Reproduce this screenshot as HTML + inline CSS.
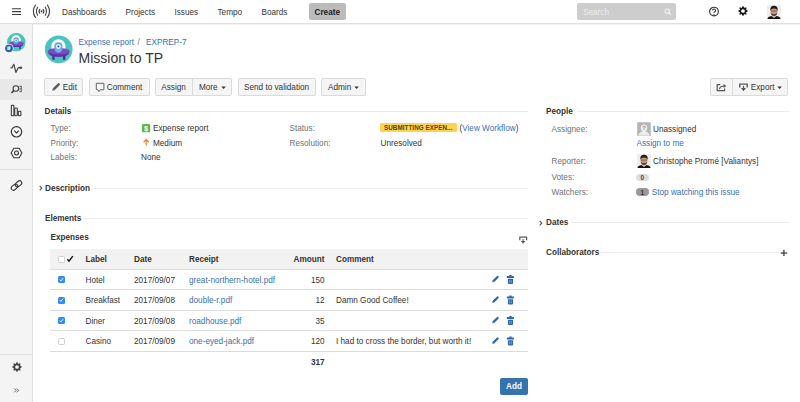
<!DOCTYPE html>
<html><head><meta charset="utf-8">
<style>
*{box-sizing:border-box;margin:0;padding:0}
html,body{width:800px;height:402px;overflow:hidden;background:#fff}
body{font-family:"Liberation Sans",sans-serif;color:#333;position:relative;font-size:8.2px}
.a{position:absolute;white-space:nowrap;line-height:1}
svg.a{overflow:visible}
#hdr{position:absolute;left:0;top:0;width:800px;height:24px;background:#fff;border-bottom:1px solid #e0e0e0;box-shadow:0 1px 0 #f3f3f3}
.nav{font-size:8.2px;color:#333;top:9px}
#create{position:absolute;left:309px;top:3px;width:37px;height:17px;background:#bbb;border-radius:2px}
#search{position:absolute;left:577px;top:3px;width:99px;height:17px;background:#cdcdcd;border-radius:2px}
#side{position:absolute;left:0;top:24px;width:33px;height:378px;background:#f4f4f4;border-right:1px solid #e0e0e0}
.btn{position:absolute;top:78px;height:18px;background:#f5f5f5;border:1px solid #dadada;border-radius:2px}
.bt{top:84.4px}
.lnk{color:#3870b0}
.lbl{color:#707070}
.b{font-weight:bold}
.hl{position:absolute;height:1px;background:#ebebeb}
.rb{position:absolute;left:50px;width:478px;height:1px;background:#dcdcdc}
.cb{position:absolute;left:58.2px;width:6.8px;height:7px;border-radius:1.5px;background:#2f8cf8}
</style></head><body>
<div id="hdr"></div>
<svg class="a" style="left:0;top:0" width="60" height="24">
 <g stroke="#3d3d3d" stroke-width="1.15"><path d="M12 8.7h9M12 11.6h9M12 14.5h9"/></g>
 <g fill="none" stroke="#3a3a3a" stroke-width="1.1" stroke-linecap="round">
  <path d="M35.5 5 Q31.1 11.25 35.5 17.5"/><path d="M47.4 5 Q51.8 11.25 47.4 17.5"/>
  <path d="M37.6 7.2 Q35.2 11.25 37.6 15.3"/><path d="M45.3 7.2 Q47.7 11.25 45.3 15.3"/>
  <path d="M39.8 9.3 Q38.2 11.25 39.8 13.2"/><path d="M43.1 9.3 Q44.7 11.25 43.1 13.2"/>
 </g>
 <circle cx="41.5" cy="11.25" r="0.9" fill="#333"/>
</svg>
<div class="a nav" style="left:62px">Dashboards</div>
<div class="a nav" style="left:125.5px">Projects</div>
<div class="a nav" style="left:174.5px">Issues</div>
<div class="a nav" style="left:217.5px">Tempo</div>
<div class="a nav" style="left:261.5px">Boards</div>
<div id="create"></div>
<div class="a b" style="left:314.5px;top:8.6px;font-size:8.2px;color:#222">Create</div>
<div id="search"></div>
<div class="a" style="left:583px;top:8.5px;font-size:8.2px;color:#eee">Search</div>
<svg class="a" style="left:662.5px;top:7px" width="10" height="10"><circle cx="4.2" cy="4.2" r="2.2" fill="none" stroke="#f2f2f2" stroke-width="1.1"/><path d="M5.8 5.8L7.8 7.8" stroke="#f2f2f2" stroke-width="1.4"/></svg>
<svg class="a" style="left:708px;top:6px" width="12" height="12"><circle cx="6" cy="5.55" r="4.35" fill="none" stroke="#333" stroke-width="1.15"/><path d="M4.45 4.5 Q4.45 3.05 6 3.05 Q7.55 3.05 7.55 4.4 Q7.55 5.3 6.6 5.8 Q6 6.15 6 7.1" fill="none" stroke="#333" stroke-width="1.05"/><circle cx="6" cy="8.35" r="0.65" fill="#333"/></svg>
<svg class="a" style="left:738px;top:6.4px" width="10" height="10" viewBox="-5 -5 10 10"><g fill="#1a1a1a" transform="scale(1.0)"><circle r="3.4"/><path d="M-1.2 -2.8L-0.55 -4.7H0.55L1.2 -2.8z" transform="rotate(0)"/><path d="M-1.2 -2.8L-0.55 -4.7H0.55L1.2 -2.8z" transform="rotate(45)"/><path d="M-1.2 -2.8L-0.55 -4.7H0.55L1.2 -2.8z" transform="rotate(90)"/><path d="M-1.2 -2.8L-0.55 -4.7H0.55L1.2 -2.8z" transform="rotate(135)"/><path d="M-1.2 -2.8L-0.55 -4.7H0.55L1.2 -2.8z" transform="rotate(180)"/><path d="M-1.2 -2.8L-0.55 -4.7H0.55L1.2 -2.8z" transform="rotate(225)"/><path d="M-1.2 -2.8L-0.55 -4.7H0.55L1.2 -2.8z" transform="rotate(270)"/><path d="M-1.2 -2.8L-0.55 -4.7H0.55L1.2 -2.8z" transform="rotate(315)"/></g><circle r="1.85" fill="#fff"/></svg>
<svg class="a" style="left:767px;top:4.5px" width="14" height="14">
 <rect width="14" height="14" fill="#ededed"/>
 <path d="M5.4 9.5h3.2v3h-3.2z" fill="#d9bba3"/>
 <path d="M0.4 14 Q0.8 11.7 4.4 11 L7 12.9 L9.6 11 Q13.2 11.7 13.6 14z" fill="#141414"/>
 <ellipse cx="7" cy="6.6" rx="3.4" ry="4" fill="#c99e7f"/>
 <path d="M3.3 6 Q2.8 0.9 7 0.8 Q11.2 0.9 10.7 6 Q10.1 3.4 7 3.4 Q3.9 3.4 3.3 6z" fill="#231b17"/>
 <path d="M3.7 7.4 Q4 10.9 7 11 Q10 10.9 10.3 7.4 Q9.5 9.2 7 9.1 Q4.5 9.2 3.7 7.4z" fill="#5b4131"/>
 <path d="M3.9 6.1h6.2" stroke="#3a2a20" stroke-width="0.55"/>
</svg>

<!-- sidebar -->
<div id="side"></div>
<div style="position:absolute;left:0;top:78.5px;width:32px;height:21px;background:#e8e8e8"></div>
<div style="position:absolute;left:0;top:168.5px;width:32px;height:1px;background:#dedede"></div>
<div style="position:absolute;left:0;top:354px;width:32px;height:1px;background:#dedede"></div>
<!-- project avatar small -->
<svg class="a" style="left:0;top:24px" width="32" height="32" viewBox="0 0 32 32">
 <circle cx="16.3" cy="18.1" r="9.9" fill="#fff"/>
 <g transform="translate(16.3 18.1) scale(0.672) translate(-14.7 -14.35)">
  <circle cx="14.7" cy="14.35" r="13.85" fill="#4cc3bd"/>
  <path d="M7.4 11.3 A7 7 0 0 1 21.4 11.3 V14 H7.4 Z" fill="#fff"/>
  <path d="M3.8 16.2 C3.8 12 25.6 12 25.6 16.2 C25.6 20.6 20.5 21.8 14.7 21.8 C8.9 21.8 3.8 20.6 3.8 16.2 Z" fill="#7a4cc4"/>
  <path d="M4.2 18 C6 20.8 10 21.8 14.7 21.8 C19.4 21.8 23.4 20.8 25.2 18 Q14.7 20.6 4.2 18z" fill="#5d35a8"/>
  <rect x="10.4" y="7.2" width="8" height="10.2" rx="4" fill="#56a7e8"/>
  <circle cx="14.4" cy="11.6" r="2.4" fill="#fff"/><circle cx="14.4" cy="11.6" r="1" fill="#2b3f6b"/>
  <rect x="8.3" y="20.5" width="2.3" height="4.2" rx="0.5" fill="#4b2a98"/><rect x="19" y="20.5" width="2.3" height="4.2" rx="0.5" fill="#4b2a98"/>
 </g>
 <circle cx="9" cy="24.3" r="4.6" fill="#fff"/>
 <circle cx="9" cy="24.3" r="3.9" fill="#2a63ae"/>
 <path d="M7.3 22.4h3.2v2.4l-1 1.1h-2.2z" fill="#d6e3f5"/>
</svg>
<!-- sidebar icons -->
<svg class="a" style="left:0;top:60px" width="32" height="300">
 <g fill="none" stroke="#333" stroke-width="1.05" stroke-linejoin="round" stroke-linecap="round">
  <path d="M10.9 7.8 L12 7.8 L13.8 4.3 L15.9 12.4 L18.2 7.7 L21 7.7" stroke="#444" stroke-width="1.2"/>
 </g>
 <circle cx="20.8" cy="7.7" r="1.25" fill="#444"/>
 <g fill="none" stroke="#333" stroke-width="1.05">
  <circle cx="15.9" cy="28.5" r="2.8" stroke="#3a3a3a"/><path d="M13.8 30.6 L11.5 32.9" stroke-width="1.5" stroke="#3a3a3a"/>
  <path d="M19.4 26.4h2.3M19.4 29h2.3M19.4 31.6h2.3M21.3 26.4v5.2" stroke-width="0.9" stroke="#555"/>
  <rect x="11.3" y="45.3" width="2.6" height="10.5" rx="0.8"/>
  <rect x="14.7" y="48" width="2.6" height="7.8" rx="0.8"/>
  <rect x="18.3" y="51.3" width="2.6" height="4.5" rx="0.8"/>
  <circle cx="16.5" cy="71.8" r="5.2" stroke-width="1.2"/>
  <path d="M14.2 70.6 L16.5 72.9 L18.8 70.6" stroke-width="1.1"/>
  <path d="M13.8 88.2 L19.2 88.2 L21.9 93 L19.2 97.8 L13.8 97.8 L11.1 93 Z"/>
  <circle cx="16.5" cy="93" r="2"/>
  <g transform="rotate(-40 16.5 125.5)"><rect x="10.3" y="123.3" width="7.2" height="4.4" rx="2.2"/><rect x="15.5" y="123.3" width="7.2" height="4.4" rx="2.2"/></g>
 </g>
 <path d="M14.3 328.5 L16.2 330.4 L14.3 332.3 M16.8 328.5 L18.7 330.4 L16.8 332.3" fill="none" stroke="#555" stroke-width="0.9"/>
</svg>
<svg class="a" style="left:11.7px;top:362px" width="10" height="10" viewBox="-5 -5 10 10"><g fill="#444" transform="scale(1.0)"><circle r="3.4"/><path d="M-1.2 -2.8L-0.55 -4.7H0.55L1.2 -2.8z" transform="rotate(0)"/><path d="M-1.2 -2.8L-0.55 -4.7H0.55L1.2 -2.8z" transform="rotate(45)"/><path d="M-1.2 -2.8L-0.55 -4.7H0.55L1.2 -2.8z" transform="rotate(90)"/><path d="M-1.2 -2.8L-0.55 -4.7H0.55L1.2 -2.8z" transform="rotate(135)"/><path d="M-1.2 -2.8L-0.55 -4.7H0.55L1.2 -2.8z" transform="rotate(180)"/><path d="M-1.2 -2.8L-0.55 -4.7H0.55L1.2 -2.8z" transform="rotate(225)"/><path d="M-1.2 -2.8L-0.55 -4.7H0.55L1.2 -2.8z" transform="rotate(270)"/><path d="M-1.2 -2.8L-0.55 -4.7H0.55L1.2 -2.8z" transform="rotate(315)"/></g><circle r="1.85" fill="#f4f4f4"/></svg>

<!-- main header -->
<svg class="a" style="left:44px;top:35px" width="30" height="30" viewBox="0 0 30 30">
  <circle cx="14.7" cy="14.35" r="13.85" fill="#4cc3bd"/>
  <path d="M7.4 11.3 A7 7 0 0 1 21.4 11.3 V14 H7.4 Z" fill="#fff"/>
  <path d="M3.8 16.2 C3.8 12 25.6 12 25.6 16.2 C25.6 20.6 20.5 21.8 14.7 21.8 C8.9 21.8 3.8 20.6 3.8 16.2 Z" fill="#7a4cc4"/>
  <path d="M4.2 18 C6 20.8 10 21.8 14.7 21.8 C19.4 21.8 23.4 20.8 25.2 18 Q14.7 20.6 4.2 18z" fill="#5d35a8"/>
  <rect x="10.4" y="7.2" width="8" height="10.2" rx="4" fill="#56a7e8"/>
  <rect x="11.6" y="9" width="5.6" height="8.4" rx="2.8" fill="#6ab4ee"/>
  <circle cx="14.4" cy="11.6" r="2.4" fill="#fff"/><circle cx="14.4" cy="11.6" r="1" fill="#2b3f6b"/>
  <rect x="8.3" y="20.5" width="2.3" height="4.2" rx="0.5" fill="#4b2a98"/><rect x="19" y="20.5" width="2.3" height="4.2" rx="0.5" fill="#4b2a98"/>
</svg>
<div class="a lnk" style="left:78.5px;top:38.9px;font-size:8.2px">Expense report</div>
<div class="a" style="left:137.6px;top:38.9px;font-size:8.2px;color:#707070">/</div>
<div class="a lnk" style="left:146px;top:38.9px;font-size:8.2px">EXPREP-7</div>
<div class="a" style="left:78.5px;top:50.6px;font-size:14px;color:#333">Mission to TP</div>

<!-- buttons -->
<div class="btn" style="left:44px;width:39px"></div>
<svg class="a" style="left:51px;top:82px" width="10" height="10"><path d="M3 7L7.7 2.3" stroke="#5e5e5e" stroke-width="2.5" stroke-linecap="round"/><path d="M1.1 8.9L1.7 6.4L3.6 8.3z" fill="#8a8a8a"/></svg>
<div class="a bt" style="left:62.8px">Edit</div>
<div class="btn" style="left:89px;width:61px"></div>
<svg class="a" style="left:95px;top:82px" width="11" height="11"><path d="M1.3 1.3h7.6v6.4h-3.6l-1.3 1.9l-1.2-1.9h-1.5z" fill="none" stroke="#5e5e5e" stroke-width="0.95" stroke-linejoin="round"/></svg>
<div class="a bt" style="left:106.8px">Comment</div>
<div class="btn" style="left:155px;width:77px"></div>
<div style="position:absolute;left:192px;top:78px;width:1px;height:18px;background:#dadada"></div>
<div class="a bt" style="left:161.3px">Assign</div>
<div class="a bt" style="left:199px">More</div>
<svg class="a" style="left:220.5px;top:86px" width="6" height="4"><path d="M0.4 0.6h4.4L2.6 2.9z" fill="#333"/></svg>
<div class="btn" style="left:237.5px;width:78.5px"></div>
<div class="a bt" style="left:244px">Send to validation</div>
<div class="btn" style="left:321px;width:45px"></div>
<div class="a bt" style="left:328px">Admin</div>
<svg class="a" style="left:354px;top:86px" width="6" height="4"><path d="M0.4 0.6h4.4L2.6 2.9z" fill="#333"/></svg>
<div class="btn" style="left:710px;width:78px"></div>
<div style="position:absolute;left:732px;top:78px;width:1px;height:18px;background:#dadada"></div>
<svg class="a" style="left:715px;top:82px" width="14" height="11"><path d="M5.2 2.6H2.2V8.6H9.6V6.6" fill="none" stroke="#555" stroke-width="1.2"/><path d="M4.4 7.1 Q5 4.1 9 4" fill="none" stroke="#555" stroke-width="1.2"/><path d="M8.6 1.9L11.3 4L8.6 6.1z" fill="#555"/></svg>
<svg class="a" style="left:738px;top:82px" width="12" height="11"><path d="M1.8 5.6V2.1H9.2V5.6" fill="none" stroke="#5a5a5a" stroke-width="1.4"/><path d="M5.5 3.8v3" stroke="#555" stroke-width="1.2"/><path d="M3 6.1H8L5.5 9.2z" fill="#555"/></svg>
<div class="a bt" style="left:750.8px">Export</div>
<svg class="a" style="left:776.5px;top:86px" width="6" height="4"><path d="M0.4 0.6h4.4L2.6 2.9z" fill="#333"/></svg>

<!-- Details -->
<div class="a b" style="left:44.5px;top:107.7px">Details</div>
<div class="hl" style="left:74.5px;top:111px;width:453.5px"></div>
<div class="a lbl" style="left:50.5px;top:124.5px">Type:</div>
<div class="a lbl" style="left:50.5px;top:139.6px">Priority:</div>
<div class="a lbl" style="left:50.5px;top:153.5px">Labels:</div>
<svg class="a" style="left:141.7px;top:123.7px" width="8.2" height="8.2"><rect width="8.2" height="8.2" rx="1.2" fill="#5fb83c"/><text x="4.1" y="6.8" font-size="6.6" fill="#fff" text-anchor="middle" font-family="Liberation Sans" stroke="#fff" stroke-width="0.25">$</text></svg>
<div class="a" style="left:153px;top:124.5px">Expense report</div>
<svg class="a" style="left:142.9px;top:137.9px" width="7" height="8"><path d="M3.2 7.6V1.6M0.6 4.3L3.2 1.5L5.8 4.3" fill="none" stroke="#f08430" stroke-width="1.25"/></svg>
<div class="a" style="left:153px;top:139.6px">Medium</div>
<div class="a" style="left:141px;top:153.5px">None</div>
<div class="a lbl" style="left:289.5px;top:124.5px">Status:</div>
<div class="a lbl" style="left:289.5px;top:139.6px">Resolution:</div>
<div style="position:absolute;left:380.2px;top:123px;width:77.2px;height:9.2px;background:#ffd351;border-radius:1.5px"></div>
<div class="a b" style="left:384px;top:125.2px;font-size:6.3px;color:#594300;letter-spacing:0.05px">SUBMITTING EXPEN...</div>
<div class="a" style="left:459.5px;top:124.5px"><span>(</span><span class="lnk">View Workflow</span><span>)</span></div>
<div class="a" style="left:380.5px;top:139.6px">Unresolved</div>

<!-- Description -->
<svg class="a" style="left:37.5px;top:183.5px" width="6" height="8"><path d="M1.7 2L3.8 4.2L1.7 6.4" fill="none" stroke="#555" stroke-width="1.1"/></svg>
<div class="a b" style="left:45px;top:184.7px">Description</div>
<div class="hl" style="left:92.5px;top:188px;width:435.5px"></div>
<!-- Elements -->
<div class="a b" style="left:45px;top:214.6px">Elements</div>
<div class="hl" style="left:83px;top:218px;width:445px"></div>
<div class="a b" style="left:50.5px;top:233.8px">Expenses</div>
<svg class="a" style="left:518px;top:234.5px" width="11" height="10"><path d="M1.8 5.3V2.1H8.6V5.3" fill="none" stroke="#5a5a5a" stroke-width="1.2"/><path d="M5.1 4v2.5" stroke="#555" stroke-width="1.1"/><path d="M2.8 6H7.4L5.1 8.8z" fill="#555"/></svg>

<!-- table -->
<div style="position:absolute;left:50px;top:249px;width:478px;height:20px;background:#f2f2f2"></div>
<div class="rb" style="top:269px"></div>
<div class="rb" style="top:289px"></div>
<div class="rb" style="top:310px"></div>
<div class="rb" style="top:330px"></div>
<div class="rb" style="top:351px"></div>
<div style="position:absolute;left:58.2px;top:255.8px;width:6.8px;height:7px;border:0.8px solid #cfcfcf;border-radius:1.5px;background:#fff"></div>
<svg class="a" style="left:66.2px;top:255px" width="8" height="8"><path d="M1.4 4.2L3 6.2L6.8 1.1" fill="none" stroke="#111" stroke-width="1.4"/></svg>
<div class="a b" style="left:85.5px;top:256px">Label</div>
<div class="a b" style="left:134px;top:256px">Date</div>
<div class="a b" style="left:189px;top:256px">Receipt</div>
<div class="a b" style="left:293.5px;top:256px">Amount</div>
<div class="a b" style="left:336px;top:256px">Comment</div>

<div class="cb" style="top:276.3px"></div>
<div class="cb" style="top:296.8px"></div>
<div class="cb" style="top:317.3px"></div>
<div style="position:absolute;left:58.2px;top:337.8px;width:6.8px;height:7px;border:0.8px solid #cfcfcf;border-radius:1.5px;background:#fff"></div>
<svg class="a" style="left:58.2px;top:276.3px" width="7" height="70"><g fill="none" stroke="#fff" stroke-width="1"><path d="M1.7 3.6L2.9 4.9L5.2 2.1"/><path d="M1.7 24.1L2.9 25.4L5.2 22.6"/><path d="M1.7 44.6L2.9 45.9L5.2 43.1"/></g></svg>

<div class="a" style="left:85.5px;top:276.5px">Hotel</div>
<div class="a" style="left:134px;top:276.5px">2017/09/07</div>
<div class="a lnk" style="left:189px;top:276.5px">great-northern-hotel.pdf</div>
<div class="a" style="left:311px;top:276.5px">150</div>

<div class="a" style="left:85.5px;top:297px">Breakfast</div>
<div class="a" style="left:134px;top:297px">2017/09/08</div>
<div class="a lnk" style="left:189px;top:297px">double-r.pdf</div>
<div class="a" style="left:315.5px;top:297px">12</div>
<div class="a" style="left:336px;top:297px">Damn Good Coffee!</div>

<div class="a" style="left:85.5px;top:317.5px">Diner</div>
<div class="a" style="left:134px;top:317.5px">2017/09/08</div>
<div class="a lnk" style="left:189px;top:317.5px">roadhouse.pdf</div>
<div class="a" style="left:315.5px;top:317.5px">35</div>

<div class="a" style="left:85.5px;top:338px">Casino</div>
<div class="a" style="left:134px;top:338px">2017/09/09</div>
<div class="a lnk" style="left:189px;top:338px">one-eyed-jack.pdf</div>
<div class="a" style="left:311px;top:338px">120</div>
<div class="a" style="left:336px;top:338px">I had to cross the border, but worth it!</div>

<svg class="a" style="left:490px;top:274px" width="26" height="72">
 <g id="ic">
 <path d="M3.7 6.9L7.6 3" stroke="#2f66b0" stroke-width="2.3" stroke-linecap="round"/>
 <path d="M2 8.6L2.5 6.4L4.2 8.1z" fill="#6f96cc"/>
 <path d="M16.9 1.9h7v2.1h-7z M19.3 0.9h2.3v1.2h-2.3z M17.9 4.8h5.2v4.3q0 0.8-0.8 0.8h-3.6q-0.8 0-0.8-0.8z" fill="#2f66b0"/>
 <path d="M19.7 5.9v2.9M21.3 5.9v2.9" stroke="#a9c2e4" stroke-width="0.6"/>
 </g>
 <use href="#ic" y="20.5"/><use href="#ic" y="41"/><use href="#ic" y="61.5"/>
</svg>

<div class="a b" style="left:311px;top:358.5px">317</div>
<div style="position:absolute;left:500px;top:377.5px;width:28px;height:17px;background:#3572b0;border-radius:2px"></div>
<div class="a b" style="left:506px;top:382.5px;color:#fff">Add</div>

<!-- People -->
<div class="a b" style="left:546px;top:107.7px">People</div>
<div class="hl" style="left:576.5px;top:111px;width:212px"></div>
<div class="a lbl" style="left:551.5px;top:125.5px">Assignee:</div>
<svg class="a" style="left:636.5px;top:122.3px" width="14" height="14"><rect width="14" height="14" rx="1.5" fill="#b4b4b4"/><rect x="0.5" y="0.5" width="13" height="13" rx="1.2" fill="none" stroke="#c9c9c9" stroke-width="0.8"/><path d="M1.8 13.6v-1.8q1.3-2.1 5.2-2.2q3.9 .1 5.2 2.2v1.8z" fill="#ededed"/><path d="M7 2.4q3.3 0 3.3 3.6q0 2.4-1.6 3.6v0.6h-3.4v-0.6q-1.6-1.2-1.6-3.6q0-3.6 3.3-3.6z" fill="#ededed"/><text x="7" y="8.2" font-size="5.6" font-weight="bold" text-anchor="middle" fill="#8a8a8a" font-family="Liberation Sans">?</text></svg>
<div class="a" style="left:653px;top:125.5px">Unassigned</div>
<div class="a lnk" style="left:636.5px;top:140px">Assign to me</div>
<div class="a lbl" style="left:551.5px;top:157.6px">Reporter:</div>
<svg class="a" style="left:636.6px;top:153.8px" width="14" height="14">
 <rect width="14" height="14" fill="#ededed"/>
 <path d="M5.4 9.5h3.2v3h-3.2z" fill="#d9bba3"/>
 <path d="M0.4 14 Q0.8 11.7 4.4 11 L7 12.9 L9.6 11 Q13.2 11.7 13.6 14z" fill="#141414"/>
 <ellipse cx="7" cy="6.6" rx="3.4" ry="4" fill="#c99e7f"/>
 <path d="M3.3 6 Q2.8 0.9 7 0.8 Q11.2 0.9 10.7 6 Q10.1 3.4 7 3.4 Q3.9 3.4 3.3 6z" fill="#231b17"/>
 <path d="M3.7 7.4 Q4 10.9 7 11 Q10 10.9 10.3 7.4 Q9.5 9.2 7 9.1 Q4.5 9.2 3.7 7.4z" fill="#5b4131"/>
 <path d="M3.9 6.1h6.2" stroke="#3a2a20" stroke-width="0.55"/>
</svg>
<div class="a" style="left:653px;top:157.6px">Christophe Promé [Valiantys]</div>
<div class="a lbl" style="left:551.5px;top:174px">Votes:</div>
<div style="position:absolute;left:636.2px;top:173.6px;width:13px;height:7.2px;border-radius:3.6px;background:#dcdcdc"></div>
<div class="a b" style="left:640.6px;top:174.7px;font-size:6.4px;color:#444">0</div>
<div class="a lbl" style="left:551.5px;top:189px">Watchers:</div>
<div style="position:absolute;left:636.2px;top:188.4px;width:13px;height:7.4px;border-radius:3.7px;background:#999"></div>
<div class="a b" style="left:640.6px;top:189.5px;font-size:6.4px;color:#333">1</div>
<div class="a lnk" style="left:651.8px;top:189px">Stop watching this issue</div>

<svg class="a" style="left:538.3px;top:218.5px" width="6" height="8"><path d="M1.7 2L3.8 4.2L1.7 6.4" fill="none" stroke="#555" stroke-width="1.1"/></svg>
<div class="a b" style="left:546px;top:219px">Dates</div>
<div class="hl" style="left:570.5px;top:222px;width:218px"></div>
<div class="a b" style="left:546px;top:249px">Collaborators</div>
<div class="hl" style="left:601px;top:252px;width:178px"></div>
<svg class="a" style="left:779.5px;top:248.5px" width="8" height="8"><path d="M3.9 0.7v6.4M0.7 3.9h6.4" stroke="#555" stroke-width="1.5"/></svg>
</body></html>
